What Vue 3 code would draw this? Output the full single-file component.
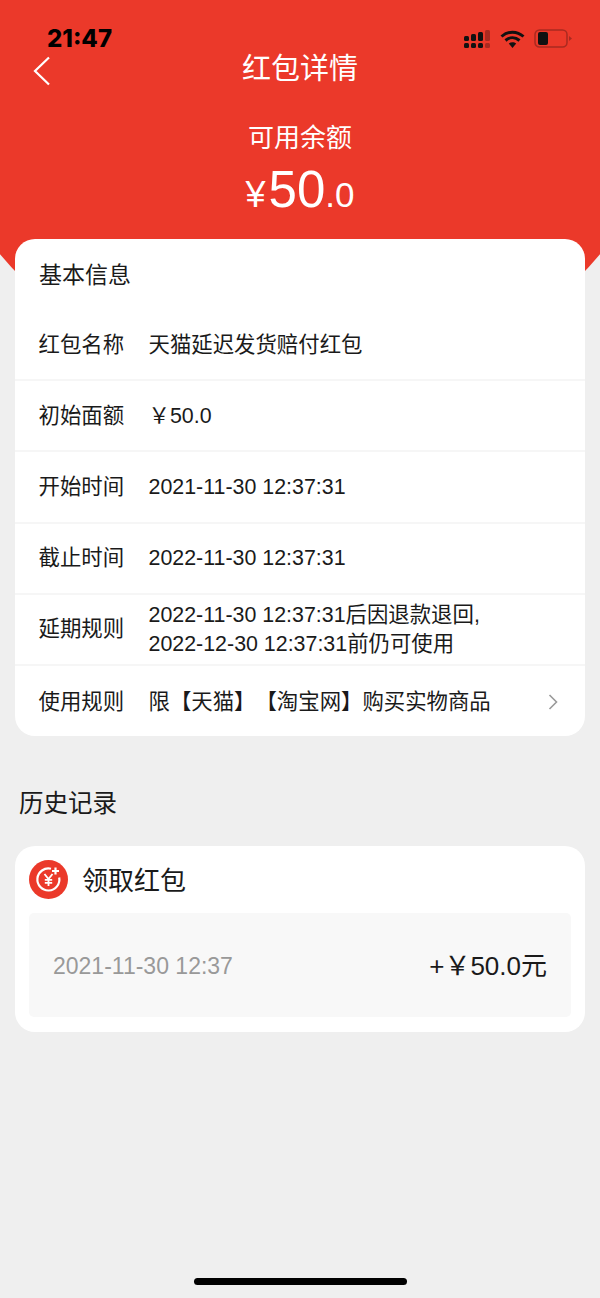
<script setup>
const rows = [
  { label: '红包名称', lines: ['天猫延迟发货赔付红包'] },
  { label: '初始面额', lines: ['￥50.0'] },
  { label: '开始时间', lines: ['2021-11-30 12:37:31'] },
  { label: '截止时间', lines: ['2022-11-30 12:37:31'] },
  { label: '延期规则', lines: ['2022-11-30 12:37:31后因退款退回,', '2022-12-30 12:37:31前仍可使用'] },
  { label: '使用规则', lines: ['限【天猫】【淘宝网】购买实物商品'], arrow: true }
]
</script>

<template>
  <div class="page">
    <div class="red-bg"></div>
    <div class="content">
      <div class="status">
        <span class="time">21:47</span>
        <div class="status-icons">
          <svg width="27" height="18" viewBox="0 0 27 18">
            <rect x="0" y="6" width="5" height="5" rx="1.500" fill="#111"/>
            <rect x="7" y="4" width="5" height="7" rx="1.500" fill="#111"/>
            <rect x="14" y="2" width="5" height="9" rx="1.500" fill="#111"/>
            <rect x="21" y="0" width="5" height="11" rx="1.500" fill="#a92a20"/>
            <rect x="0" y="13" width="5" height="5" rx="1.500" fill="#111"/>
            <rect x="7" y="13" width="5" height="5" rx="1.500" fill="#111"/>
            <rect x="14" y="13" width="5" height="5" rx="1.500" fill="#111"/>
            <rect x="21" y="13" width="5" height="5" rx="1.500" fill="#a92a20"/>
          </svg>
          <svg width="25" height="18" viewBox="0 0 25 18">
            <path d="M1.500 6.500C8 .7 17 .7 23.500 6.500M5.500 10.500C9.800 6.800 15.200 6.800 19.500 10.500" fill="none" stroke="#111" stroke-width="3"/>
            <path d="M8.800 13.600C11 11.700 14 11.700 16.200 13.600L12.500 18Z" fill="#111"/>
          </svg>
          <svg width="38" height="19" viewBox="0 0 38 19">
            <rect x="1" y="1" width="32" height="17" rx="4.500" fill="none" stroke="#a92a20" stroke-width="1.500"/>
            <rect x="4" y="3" width="10" height="13" rx="2" fill="#111"/>
            <path d="M35 7L38 9.500L35 12Z" fill="#a92a20"/>
          </svg>
        </div>
      </div>
      <div class="nav">
        <svg class="back" width="18" height="30" viewBox="0 0 18 30">
          <path d="M16 1.500L2 15L16 28.500" fill="none" stroke="#fff" stroke-width="2.200"/>
        </svg>
        <span class="nav-title">红包详情</span>
      </div>
      <div class="balance-label">可用余额</div>
      <div class="balance"><span class="yen">¥</span><span class="big">50</span><span class="small">.0</span></div>

      <section class="card info">
        <div class="info-head">基本信息</div>
        <div v-for="row in rows" :key="row.label" class="row">
          <span class="label">{{ row.label }}</span>
          <div class="value">
            <div v-for="line in row.lines" :key="line">{{ line }}</div>
          </div>
          <svg v-if="row.arrow" class="arrow" width="10" height="16" viewBox="0 0 10 16">
            <path d="M1.500 1L8.500 8L1.500 15" fill="none" stroke="#999" stroke-width="1.600"/>
          </svg>
        </div>
      </section>

      <h2 class="history-title">历史记录</h2>

      <section class="card history">
        <div class="history-head">
          <svg class="coin" width="39" height="39" viewBox="0 0 39 39">
            <circle cx="19.500" cy="19.500" r="19.500" fill="#eb392a"/>
            <path d="M22 8.800A11 11 0 1 0 30.200 17.500" fill="none" stroke="#fff" stroke-width="2.200"/>
            <path d="M15.500 14L19.500 19L23.500 14M19.500 19V26M15.800 19.800H23.200M15.800 22.800H23.200" fill="none" stroke="#fff" stroke-width="1.800"/>
            <path d="M26.500 7.500V14.500M23 11H30" fill="none" stroke="#fff" stroke-width="2.200"/>
          </svg>
          <span class="history-name">领取红包</span>
        </div>
        <div class="history-body">
          <span class="history-date">2021-11-30 12:37</span>
          <span class="history-amount">+￥50.0元</span>
        </div>
      </section>
    </div>
    <div class="home-bar"></div>
  </div>
</template>

<style>
html, body { margin: 0; background: #efefef; }
</style>

<style scoped>
.page {
  position: relative;
  width: 600px;
  height: 1298px;
  overflow: hidden;
  background: #efefef;
  font-family: "Liberation Sans", "Noto Sans CJK SC", sans-serif;
  color: #1a1a1a;
  text-spacing-trim: space-all;
}
.red-bg {
  position: absolute;
  left: 0;
  top: 0;
  width: 600px;
  height: 400px;
  background: #eb392a;
  clip-path: circle(392px at 300px 2px);
}
.content { position: relative; }
.status {
  height: 50px;
  box-sizing: border-box;
  padding: 25px 28px 0 47px;
  display: flex;
  justify-content: space-between;
  align-items: flex-start;
}
.time {
  font-family: Inter, sans-serif;
  font-weight: 800;
  font-size: 24px;
  line-height: 27px;
  color: #000;
}
.status-icons {
  display: flex;
  align-items: center;
  gap: 9px;
  padding-top: 4px;
}
.nav {
  position: relative;
  height: 38px;
  display: flex;
  align-items: center;
  justify-content: center;
}
.back { position: absolute; left: 33px; top: 6px; }
.nav-title { font-size: 29px; color: #fff; line-height: 38px; }
.balance-label {
  margin-top: 32px;
  text-align: center;
  font-size: 26px;
  line-height: 36px;
  color: #fff;
}
.balance {
  height: 83px;
  display: flex;
  justify-content: center;
  align-items: baseline;
  color: #fff;
  line-height: 68px;
}
.yen { font-size: 36px; margin-right: 3px; }
.big { font-size: 51px; }
.small { font-size: 35px; }
.card {
  background: #fff;
  border-radius: 20px;
  margin: 0 15px;
}
.info { height: 497px; }
.info-head {
  height: 71px;
  box-sizing: border-box;
  padding: 0 24px;
  font-size: 23px;
  line-height: 72px;
}
.row {
  height: 71.200px;
  box-sizing: border-box;
  padding: 1px 27px 0 23.500px;
  display: flex;
  align-items: center;
  border-bottom: 2px solid #f6f6f6;
  font-size: 21.400px;
  line-height: 29px;
}
.row:last-child { border-bottom: none; height: 70px; padding-top: 3px; }
.label { width: 110px; flex: none; }
.value { flex: 1; min-width: 0; white-space: nowrap; }
.arrow { flex: none; }
.history-title {
  margin: 51px 0 0 19px;
  height: 59px;
  font-weight: 400;
  font-size: 24.500px;
  line-height: 34px;
}
.history { height: 186px; padding: 0 14px; }
.history-head {
  height: 67px;
  display: flex;
  align-items: center;
  gap: 14px;
}
.history-name { font-size: 26px; padding-bottom: 2px; }
.history-body {
  height: 104px;
  background: #f8f8f8;
  border-radius: 5px;
  padding: 0 24px;
  display: flex;
  align-items: center;
  justify-content: space-between;
}
.history-date { font-size: 23px; color: #999; padding-top: 2px; }
.history-amount { font-size: 26px; padding-bottom: 3px; }
.home-bar {
  position: absolute;
  left: 194px;
  top: 1278px;
  width: 213px;
  height: 7px;
  border-radius: 4px;
  background: #000;
}
</style>
